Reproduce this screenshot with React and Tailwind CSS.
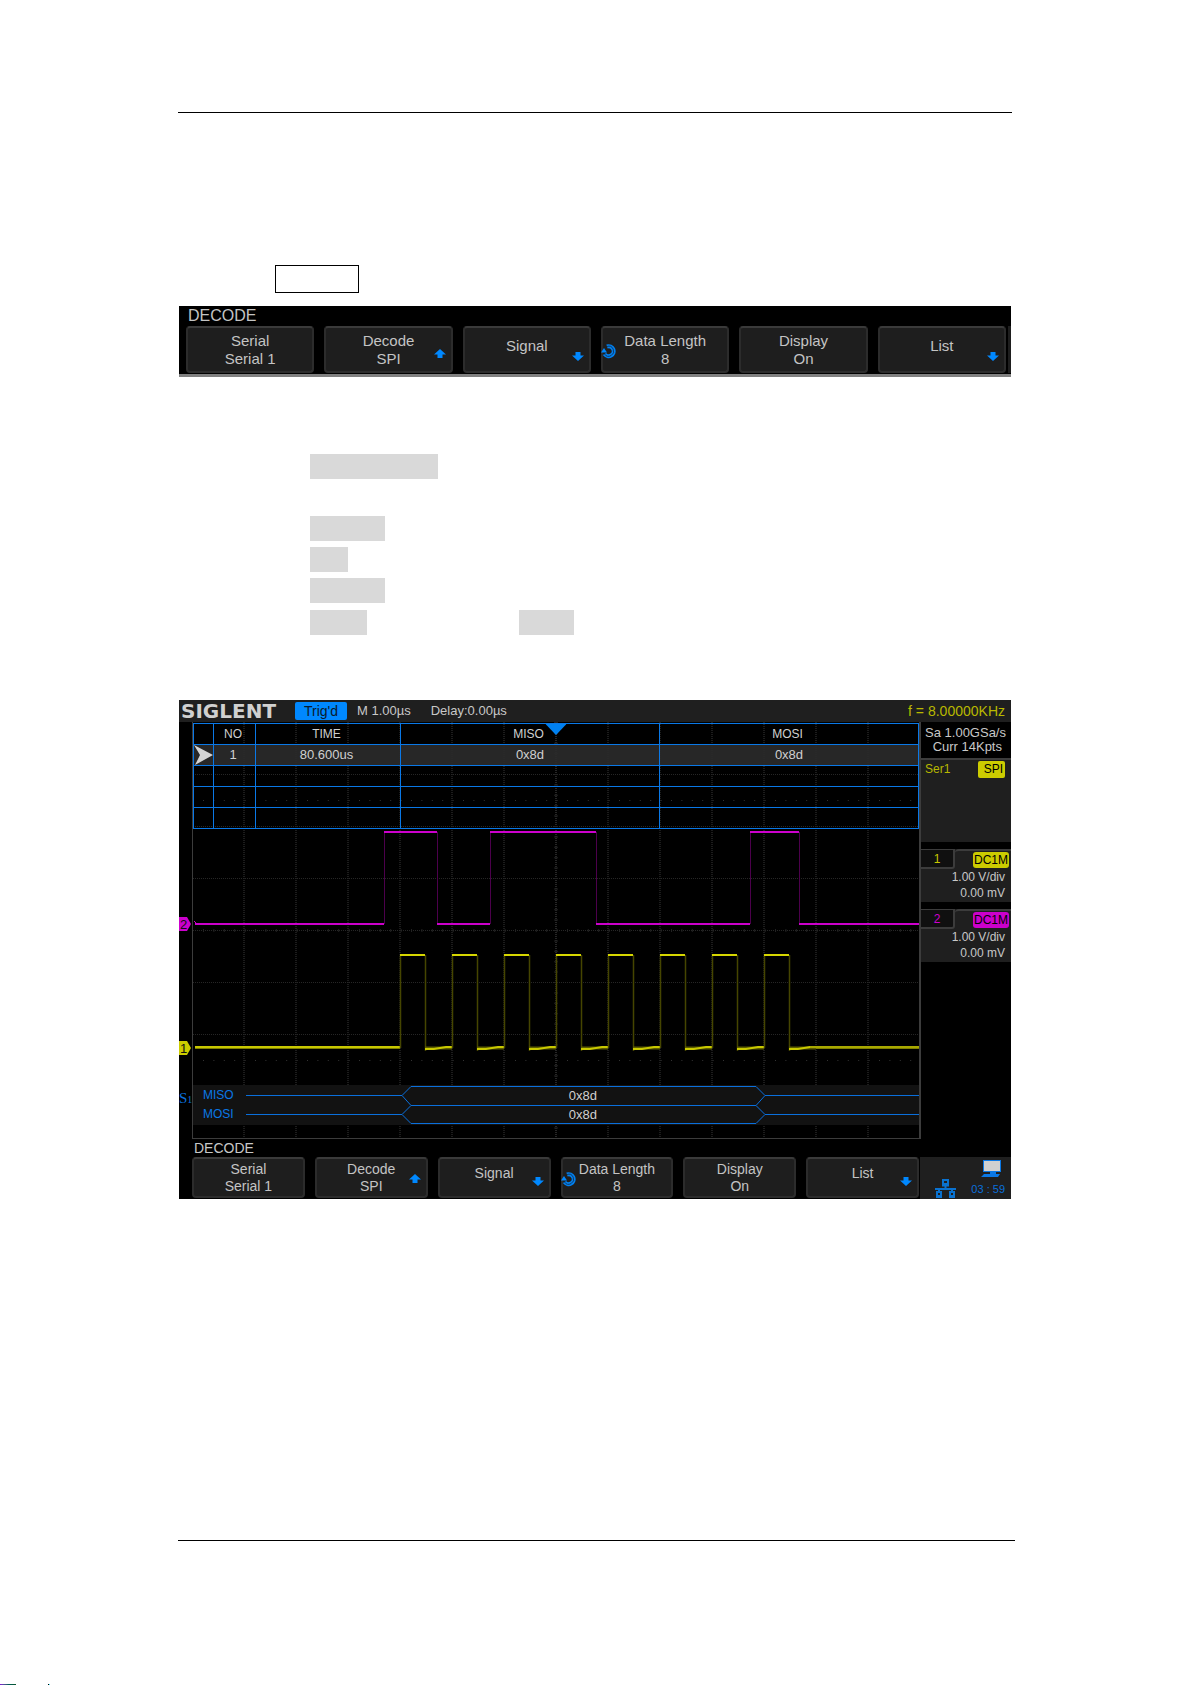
import React from 'react';

const softkeys = [
  { id: 'serial', label: 'Serial', value: 'Serial 1' },
  { id: 'decode', label: 'Decode', value: 'SPI', arrow: 'up' },
  { id: 'signal', label: 'Signal', arrow: 'down' },
  { id: 'length', label: 'Data Length', value: '8', knob: true },
  { id: 'display', label: 'Display', value: 'On' },
  { id: 'list', label: 'List', arrow: 'down' },
];

const channels = [
  { id: '1', scale: '1.00 V/div', offset: '0.00 mV', text: 'text-[#c8c800]', badge: 'bg-[#cccc00]' },
  { id: '2', scale: '1.00 V/div', offset: '0.00 mV', text: 'text-[#cc00cc]', badge: 'bg-[#cc00cc]' },
];

const buses = [
  { name: 'MISO', value: '0x8d' },
  { name: 'MOSI', value: '0x8d' },
];

const gridX = Array.from({ length: 13 }, (_, i) => 51 + i * 52).filter((x) => x < 727);
const gridY = [52, 104, 156, 208, 260, 312];
const clocks = Array.from({ length: 8 }, (_, i) => 207 + i * 52);

// [start, end, high]
const dataLevels = [
  [2, 191, false],
  [191, 244, true],
  [244, 297, false],
  [297, 403, true],
  [403, 557, false],
  [557, 606, true],
  [606, 726, false],
];

const ArrowIcon = ({ direction }) => (
  <svg viewBox="0 0 12 9" className="h-[9px] w-3" aria-hidden="true">
    <path
      d={direction === 'up' ? 'M6 0L12 5.5H8.5V9H3.5V5.5H0Z' : 'M6 9L0 3.5H3.5V0H8.5V3.5H12Z'}
      fill="#0088ff"
    />
  </svg>
);

const KnobIcon = () => (
  <svg viewBox="0 0 15 16" className="h-4 w-[15px]" aria-hidden="true" fill="none">
    <path d="M6 3.5A5 5 0 1 1 3.5 11" stroke="#0080f0" strokeWidth="4" />
    <path d="M6 3.5A5 5 0 1 1 3.5 11" stroke="#123a63" strokeWidth="1" />
    <path d="M3 5L6 9.5H0Z" fill="#0088ff" />
  </svg>
);

const Softkey = ({ item, large }) => (
  <button
    type="button"
    className={`relative flex min-w-0 flex-col items-center justify-center rounded-[4px] border-2 border-[#2c2c2c] border-t-[#3a3a3a] bg-[#1e1e1e] text-[#c4c4c4] ${
      large ? 'h-[47px] text-[15px] leading-[18px]' : 'h-[41px] text-[14px] leading-[17px]'
    } ${item.value ? '' : 'pb-2'}`}
  >
    <span>{item.label}</span>
    {item.value && <span>{item.value}</span>}
    {item.arrow && (
      <span className={`absolute right-[5px] flex ${item.arrow === 'up' ? 'bottom-[13px]' : 'bottom-[10px]'}`}>
        <ArrowIcon direction={item.arrow} />
      </span>
    )}
    {item.knob && (
      <span className={`absolute -left-[2px] flex ${large ? 'top-[15px]' : 'top-[12px]'}`}>
        <KnobIcon />
      </span>
    )}
  </button>
);

const Highlight = ({ width }) => <span className={`block h-[25px] bg-[#d9d9d9] ${width}`} />;

const Waveforms = () => (
  <svg
    viewBox="0 0 726 416"
    preserveAspectRatio="none"
    className="absolute inset-0 h-full w-full"
    aria-hidden="true"
    fill="none"
  >
    {/* Graticule */}
    <g stroke="#262626">
      {gridX.map((x) => (
        <path key={x} d={`M${x} 0V416`} strokeWidth={x === 363 ? 2 : 1.5} strokeDasharray="1 1" />
      ))}
      {gridY.map((y) => (
        <path key={y} d={`M0 ${y + 0.5}H726`} strokeDasharray="1 1" />
      ))}
      <path d="M10 78.5H726M10 338.5H726" stroke="#333" strokeDasharray="1 9.4" />
      <path d="M10 208.5H726" strokeWidth="3" stroke="#222" strokeDasharray="1 9.4" />
      <path d="M363 0V416" strokeWidth="4" stroke="#222" strokeDasharray="1 9.4" />
    </g>

    {/* Channel 2 */}
    <path
      d="M191.5 110V202M244.5 110V202M297.5 110V202M403.5 110V202M557.5 110V202M606.5 110V202"
      stroke="#4c004c"
    />
    {dataLevels.map(([x1, x2, high]) => (
      <path key={x1} d={`M${x1} ${high ? 110 : 202}H${x2}`} stroke="#cc00cc" strokeWidth="2" />
    ))}
    <path d="M1 199L4 202" stroke="#cc00cc" />

    {/* Channel 1 */}
    <path d="M2 325.5H207" stroke="#808000" strokeWidth="3" />
    <path d="M2 325H207" stroke="#c8c800" strokeWidth="2" />
    {clocks.map((x) => (
      <g key={x}>
        <path d={`M${x + 0.5} 233V326M${x + 25.5} 233V329`} stroke="#454500" strokeWidth="1.5" />
        <path d={`M${x} 233H${x + 25}`} stroke="#d6d600" strokeWidth="2" />
        <path d={`M${x + 25} 326H${x + 52}`} stroke="#5c5c00" strokeWidth="3" />
        <path d={`M${x + 25} 327H${x + 34}L${x + 46} 325H${x + 52}`} stroke="#c8c800" strokeWidth="2" />
      </g>
    ))}
    <path d="M623 325.5H726" stroke="#808000" strokeWidth="3" />
    <path d="M617 325H726" stroke="#a8a800" strokeWidth="2" />

    {/* Decoded bus */}
    <path d="M0 363H726V403H0Z" fill="#121212" />
    <g stroke="#0a6fdc">
      <path d="M53 373.5H209L218 364.5H563L572 373.5H726" />
      <path d="M209 373.5L218 383.5H563L572 373.5" />
      <path d="M53 392.5H209L218 383.5M563 383.5L572 392.5H726" />
      <path d="M209 392.5L218 401.5H563L572 392.5" />
    </g>
  </svg>
);

const DecodeTable = () => (
  <table className="relative w-full table-fixed border-collapse text-center text-[#d0d0d0]">
    <colgroup>
      <col className="w-[20px]" />
      <col className="w-[42px]" />
      <col className="w-[20%]" />
      <col />
      <col />
    </colgroup>
    <thead>
      <tr className="h-[21px] text-[12px] leading-[16px]">
        {['', 'NO', 'TIME', 'MISO', 'MOSI'].map((title) => (
          <th key={title} className="border border-[#0a78e6] p-0 pr-[3px] font-normal">{title}</th>
        ))}
      </tr>
    </thead>
    <tbody className="text-[13px] leading-[16px]">
      <tr className="h-[21px] bg-[#2b2b2b]/90">
        <td className="border border-[#0a78e6] p-0">
          <svg viewBox="0 0 19 20" className="h-5 w-[19px]" aria-hidden="true">
            <path d="M0 0L19 10L1 20L6 10Z" fill="#d4d4d4" />
          </svg>
        </td>
        <td className="border border-[#0a78e6] p-0 pr-[3px]">1</td>
        <td className="border border-[#0a78e6] p-0 pr-[3px]">80.600us</td>
        <td className="border border-[#0a78e6] p-0">0x8d</td>
        <td className="border border-[#0a78e6] p-0">0x8d</td>
      </tr>
      {[1, 2, 3].map((row) => (
        <tr key={row} className="h-[21px]">
          {[1, 2, 3, 4, 5].map((cell) => (
            <td key={cell} className="border border-[#0a78e6] p-0" />
          ))}
        </tr>
      ))}
    </tbody>
  </table>
);

const ChannelMarker = ({ label, fill }) => (
  <svg viewBox="0 0 12 14" className="h-[14px] w-3" role="img" aria-label={`Channel ${label}`}>
    <path d="M0 0H8L12 7L8 14H0Z" fill={fill} />
    <text x="1" y="12" fontSize="13" fill="#111">{label}</text>
  </svg>
);

const Sidebar = () => (
  <aside className="w-[90px] shrink-0 text-[13px] text-[#c8c8c8]">
    <div className="flex h-9 flex-col justify-center pr-[5px] text-right leading-[14px]">
      <p>Sa 1.00GSa/s</p>
      <p className="pr-1">Curr 14Kpts</p>
    </div>
    <div className="flex h-[84px] items-start justify-between border-t-2 border-[#3c3c3c] bg-[#1f1f1f] pt-px pr-[6px] pl-1 text-[12px]">
      <span className="leading-[16px] text-[#b8b800]">Ser1</span>
      <span className="rounded-[2px] bg-[#cccc00] pr-[2px] pl-[6px] leading-[17px] text-black">SPI</span>
    </div>
    {channels.map((ch) => (
      <div key={ch.id} className="mt-[7px] h-[53px] bg-[#1f1f1f]">
        <div className="flex h-5">
          <span
            className={`w-[34px] rounded-br-[3px] border-t border-r-2 border-b-2 border-[#3c3c3c] bg-[#101010] text-center text-[12px] leading-[18px] ${ch.text}`}
          >
            {ch.id}
          </span>
          <span className="flex flex-1 items-start justify-end rounded-tl-[4px] border-t-2 border-[#3c3c3c] pr-[2px]">
            <span className={`mt-px rounded-[3px] px-px text-[12px] leading-[16px] text-black ${ch.badge}`}>DC1M</span>
          </span>
        </div>
        <p className="pr-[6px] text-right text-[12px] leading-[17px]">{ch.scale}</p>
        <p className="pr-[6px] text-right text-[12px] leading-[15px]">{ch.offset}</p>
      </div>
    ))}
  </aside>
);

const StatusPanel = () => (
  <div className="flex h-[42px] w-[91px] shrink-0 items-end justify-between bg-[#1f1f1f] pr-[6px] pl-[15px]">
    <svg viewBox="0 0 21 19" className="mb-px h-[19px] w-[21px]" aria-hidden="true" fill="none" stroke="#0a72d0">
      <path d="M10.5 7V10M0 10H21M4 10V13M17 10V13" strokeWidth="2" />
      <path d="M8 1H13V5H8ZM2 13H6V17H2ZM15 13H19V17H15Z" strokeWidth="2" />
      <path d="M7 6.5H14M1 18H7M14 18H20" strokeWidth="2" />
    </svg>
    <div className="flex flex-col items-end text-[11px] text-[#0a6fdc]">
      <svg viewBox="0 0 20 18" className="mr-1 h-[18px] w-5" aria-hidden="true">
        <path d="M2 0H20V12H2Z" fill="#0a78e6" />
        <path d="M3 1H19V11H3Z" fill="#d0d0d0" />
        <path d="M9 12H15V14H9ZM3 14H19L17 17H0Z" fill="#0a78e6" />
      </svg>
      <span className="pt-px leading-[20px]">03 : 59</span>
    </div>
  </div>
);

const Oscilloscope = () => (
  <section className="bg-black text-[#c8c8c8]">
    <header className="flex h-[22px] items-center bg-[#1f1f1f] pr-[6px] pl-[2px]">
      <span className="w-[96px] font-['DejaVu_Sans',sans-serif] text-[20px] leading-[20px] font-bold text-[#d0d0d0]">SIGLENT</span>
      <span className="ml-[18px] w-[52px] rounded-[2px] bg-[#0088ff] text-center text-[14px] leading-[18px] text-[#0a1a2c]">
        Trig'd
      </span>
      <span className="ml-[10px] text-[13px]">M 1.00µs</span>
      <span className="ml-5 text-[13px]">Delay:0.00µs</span>
      <span className="ml-auto text-[14px] text-[#b8b800]">f = 8.00000KHz</span>
    </header>

    <div className="flex">
      {/* Channel offsets */}
      <div className="relative w-[13px] shrink-0">
        <span className="absolute top-[195px] left-0 flex">
          <ChannelMarker label="2" fill="#cc00cc" />
        </span>
        <span className="absolute top-[319px] left-0 flex">
          <ChannelMarker label="1" fill="#cccc00" />
        </span>
        <span className="absolute top-[368px] left-0 flex items-end font-['Liberation_Serif',serif] text-[15px] leading-[16px] text-[#0a6fdc]">
          S<small className="text-[10px] leading-[12px]">1</small>
        </span>
      </div>

      <div className="relative flex h-[417px] flex-1 flex-col justify-between border-r-2 border-b border-l border-[#3c3c3c] pt-px pb-[14px]">
        <Waveforms />
        <DecodeTable />
        <svg viewBox="0 0 21 11" className="absolute top-[2px] left-1/2 h-[11px] w-[21px] -translate-x-1/2" aria-hidden="true">
          <path d="M0 0H21L10.5 11Z" fill="#0080f0" />
        </svg>
        <div className="relative">
          {buses.map((bus) => (
            <div key={bus.name} className="grid grid-cols-[209fr_363fr_155fr] leading-[19px]">
              <span className="pl-[10px] text-[12px] text-[#0a78e6]">{bus.name}</span>
              <span className="text-center text-[13px] text-[#d0d0d0]">{bus.value}</span>
            </div>
          ))}
        </div>
      </div>

      <Sidebar />
    </div>

    <p className="pl-[15px] text-[14px] leading-[18px]">DECODE</p>
    <div className="flex">
      <div className="grid flex-1 grid-cols-6 gap-[10px] pr-px pl-[13px]">
        {softkeys.map((item) => (
          <Softkey key={item.id} item={item} />
        ))}
      </div>
      <StatusPanel />
    </div>
  </section>
);

const App = () => {
  return (
    <div className="bg-white pr-[2px] font-['Liberation_Sans',Arial,sans-serif]">
      <main className="mx-auto max-w-[834px] pt-28">
        <hr className="border-black" />

        <div className="mt-[152px] ml-[97px] h-7 w-[84px] border border-black" />

        <section className="mx-px mt-[13px] border-b-[3px] border-[#808080] bg-black">
          <p className="pl-[9px] text-[16px] leading-[20px] text-[#c4c4c4]">DECODE</p>
          <div className="flex pb-px">
            <div className="grid flex-1 grid-cols-6 gap-[10px] pr-[2px] pl-[7px]">
              {softkeys.map((item) => (
                <Softkey key={item.id} item={item} large />
              ))}
            </div>
            <div className="w-[3px] bg-[#1e1e1e]" />
          </div>
        </section>

        <div className="mt-[77px] flex flex-col gap-[6px] pl-[132px]">
          <Highlight width="w-[128px]" />
          <Highlight width="mt-[31px] w-[75px]" />
          <Highlight width="w-[38px]" />
          <Highlight width="w-[75px]" />
          <div className="flex gap-[152px] pt-px">
            <Highlight width="w-[57px]" />
            <Highlight width="w-[55px]" />
          </div>
        </div>

        <div className="mx-px mt-[65px]">
          <Oscilloscope />
        </div>

        <hr className="mt-[341px] -mr-[3px] border-black" />
      </main>

      <div className="mt-[143px] flex h-px">
        <span className="w-4 bg-linear-to-r from-purple-700 via-teal-800 to-green-900" />
        <span className="ml-8 w-px bg-black" />
        <span className="w-px bg-cyan-300" />
      </div>
    </div>
  );
};

export default App;
